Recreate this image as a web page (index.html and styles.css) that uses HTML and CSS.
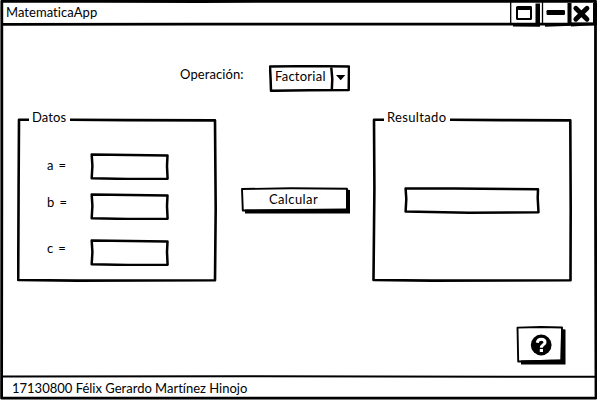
FILE: index.html
```html
<!DOCTYPE html>
<html lang="es">
<head>
<meta charset="utf-8">
<title>MatematicaApp</title>
<link rel="stylesheet" href="styles.css">
</head>
<body>
<div class="window">
  <header class="titlebar">
    <span class="title">MatematicaApp</span>
    <div class="controls">
      <svg width="87" height="27" viewBox="510 0 87 27" aria-hidden="true">
        <path class="thin" d="M510.7 1V24M542.5 1V24"/>
        <path d="M535.5 3.5H540V26.7L513 26.5V23H535.5Z"/>
        <path d="M567.5 3H571.5V25.8L545 26.7V23H567.5Z"/>
        <path d="M593 3H597V25L571 26.5V22.5H593Z"/>
        <path d="M517.5 6H531Q532 6 532 7.5V18.5Q532 20 530.5 20H517.5Q516 20 516 18.5V7.5Q516 6 517.5 6ZM518 10V18H530V10Z" fill-rule="evenodd"/>
        <rect x="546.5" y="10" width="18.5" height="5" rx="1.3"/>
        <path class="cross" d="M575.8 8.2L587 19.3M587 8.2L575.8 19.3"/>
      </svg>
    </div>
  </header>
  <main class="content">
    <div class="operation">
      <label class="operation-label">Operación:</label>
      <div class="select">
        <svg class="sketch" viewBox="0 0 81 27" aria-hidden="true">
          <path class="line" d="M1 1.6L40 1.1L80 1.5L79.7 25L40 25.3L2 25.8L1.6 14ZM62.2 1.5L63.3 14L62.8 25"/>
          <path d="M67 10H76.3L71.7 15.2Z"/>
        </svg>
        <span class="select-value">Factorial</span>
      </div>
    </div>
    <div class="panels">
      <section class="group">
        <svg class="sketch" viewBox="0 0 200 164" aria-hidden="true">
          <path class="group-line" d="M12 1.7H2L1.6 70L1.2 162L60 162.6L198 162.3L198.7 90L198 2.4L110 2.1L53 1.7"/>
        </svg>
        <h2 class="legend datos">Datos</h2>
        <div class="field field-a"><label>a =</label><div class="input"><svg class="sketch" viewBox="0 0 79 27" aria-hidden="true"><path class="line" d="M1.7 1.6L40 2L77.5 2.4L77 13L77.6 25.7L38 26L1.7 25.2L2.4 13Z"/></svg></div></div>
        <div class="field field-b"><label>b =</label><div class="input"><svg class="sketch" viewBox="0 0 79 27" aria-hidden="true"><path class="line" d="M1.7 1.6L40 2L77.5 2.4L77 13L77.6 25.7L38 26L1.7 25.2L2.4 13Z"/></svg></div></div>
        <div class="field field-c"><label>c =</label><div class="input"><svg class="sketch" viewBox="0 0 79 27" aria-hidden="true"><path class="line" d="M1.7 1.6L40 2L77.5 2.4L77 13L77.6 25.7L38 26L1.7 25.2L2.4 13Z"/></svg></div></div>
      </section>
      <div class="button">
        <svg class="sketch" viewBox="0 0 109 27" aria-hidden="true">
          <path class="button-line" d="M1 2L50 1.3L106 1.7L106 23L1.8 23.5Z"/>
          <path d="M4 22.5L50 22L105 21.5V2.5L109 3V26.5H4Z"/>
        </svg>
        <span>Calcular</span>
      </div>
      <section class="group">
        <svg class="sketch" viewBox="0 0 200 164" aria-hidden="true">
          <path class="group-line" d="M12 1.7H2L2.4 70L1.5 162L60 162.6L198.5 162.3L198.7 90L198.3 2.4L130 2.1L78 1.7"/>
        </svg>
        <h2 class="legend">Resultado</h2>
        <div class="result"><svg class="sketch" viewBox="0 0 136 27" aria-hidden="true"><path class="line" d="M1.6 1.6L50 1.6L134 2.3L133.7 11L134.5 25.2L65 25.7L1.6 24.6L2.3 12Z"/></svg></div>
      </section>
    </div>
    <div class="help-row">
      <div class="help">
        <svg class="sketch" viewBox="0 0 50 39" aria-hidden="true">
          <path class="button-line" d="M1.5 1.6L25 1L46 1.5L45.5 34.5L2.2 35.5Z"/>
          <path d="M5 34.5L44.5 33.5L45.2 3L49.5 3.5V38.4H5Z"/>
          <circle cx="25.2" cy="19" r="10.4"/>
          <path class="question" d="M21.3 16.7Q21.7 13.3 25.3 13.3Q29 13.3 29 16.4C29 18.7 25.4 18.7 25.4 21.7"/>
          <rect class="dot" x="23.8" y="23" width="3.2" height="3"/>
        </svg>
      </div>
    </div>
  </main>
  <footer class="statusbar"><span class="status">17130800 Félix Gerardo Martínez Hinojo</span></footer>
  <svg class="sketch" viewBox="0 0 597 400" aria-hidden="true">
    <path class="frame" d="M1.8 1.2L200 1.5L595.5 1.2L595.5 200L596 398L300 398.2L1.6 398.2L1.8 200Z"/>
    <path class="frame" d="M2 24.4L200 24.2L595 24.2"/>
    <path class="rule" d="M2 376.6L250 376.3L595 376.8"/>
  </svg>
</div>
</body>
</html>
```
FILE: styles.css
```css
* { box-sizing: border-box; }
body {
  margin: 0;
  background: #fff;
  color: #000;
  font: 13px/16px Lato, "Liberation Sans", sans-serif;
  font-variant-ligatures: none;
}
.window {
  position: relative;
  display: flex;
  flex-direction: column;
  width: 597px;
  height: 400px;
  overflow: hidden;
}
.sketch {
  position: absolute;
  inset: 0;
  width: 100%;
  height: 100%;
  pointer-events: none;
}
svg { display: block; fill: #000; }
.line, .group-line, .button-line, .frame, .rule, .thin, .cross, .question {
  fill: none;
  stroke: #000;
  stroke-width: 2.5;
  stroke-linejoin: round;
}
.group-line { stroke-width: 2.6; }
.frame { stroke-width: 2.8; }
.rule { stroke-width: 2; }
.button-line { stroke-width: 1.9; }
.thin { stroke-width: 1.3; }
.cross { stroke-width: 4.8; stroke-linecap: round; }
.question { stroke: #fff; stroke-width: 3; }
.dot { fill: #fff; }

.titlebar {
  display: flex;
  justify-content: space-between;
  height: 25px;
  padding-left: 6px;
}
.title { padding-top: 4px; letter-spacing: 0.05px; }
.content { flex: 1; }
.operation {
  display: flex;
  height: 93px;
  padding: 40px 0 0 180px;
}
.operation-label { width: 89px; padding-top: 1px; letter-spacing: 0.1px; }
.select {
  position: relative;
  width: 81px;
  height: 27px;
  padding: 3px 6px;
  letter-spacing: 0.25px;
}
.panels { display: flex; height: 164px; padding-left: 17px; }
.group { position: relative; width: 200px; height: 164px; }
.legend {
  margin: -9px 0 0 15px;
  font: inherit;
  font-variant-ligatures: none;
  letter-spacing: 0.35px;
}
.datos { letter-spacing: 0.1px; }
.field { display: flex; height: 27px; padding-left: 30px; }
.field label {
  width: 43px;
  padding-top: 4px;
  letter-spacing: 0.4px;
  word-spacing: 1px;
}
.field-a { margin-top: 28px; }
.field-b { margin-top: 13px; }
.field-c { margin-top: 19px; }
.field-b label, .field-c label { padding-top: 1px; }
.input { position: relative; width: 79px; height: 27px; }
.button {
  position: relative;
  width: 109px;
  height: 27px;
  margin: 69px 22px 0 24px;
  padding: 4px 4px 0 0;
  text-align: center;
  letter-spacing: 0.4px;
}
.result { position: relative; width: 136px; height: 27px; margin: 62px 0 0 32px; }
.help-row { display: flex; justify-content: flex-end; padding: 44px 31px 0 0; }
.help { position: relative; width: 50px; height: 39px; }
.statusbar { height: 24px; padding: 4px 0 0 12px; }
```
